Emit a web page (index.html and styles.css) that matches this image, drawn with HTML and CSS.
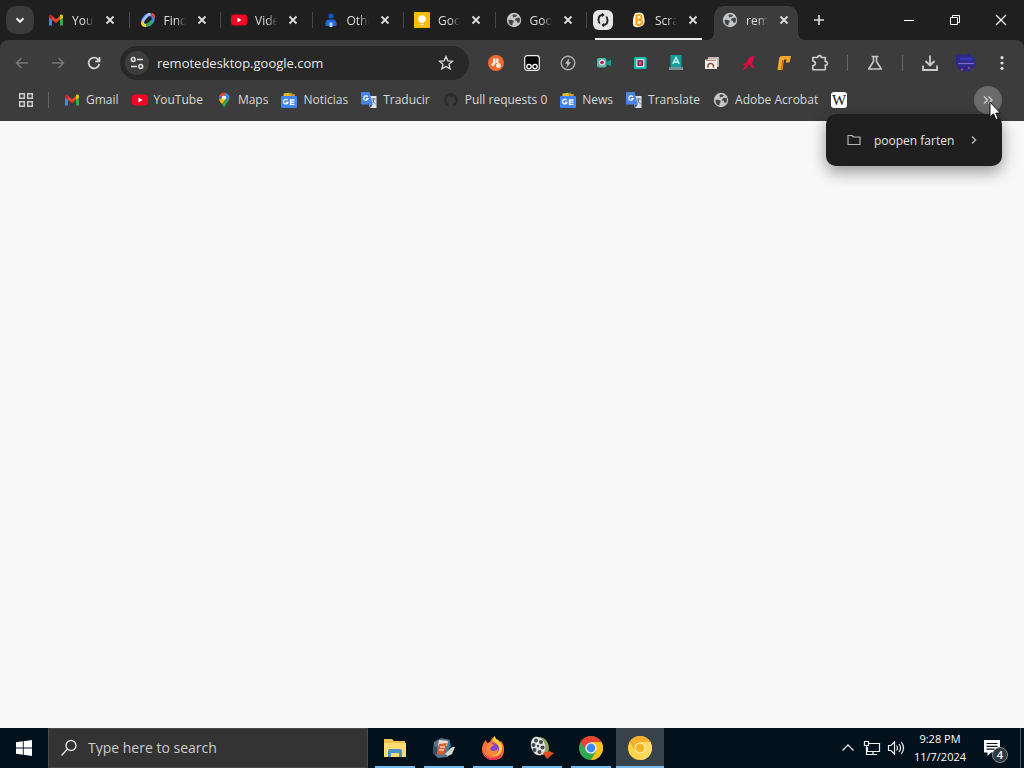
FILE: index.html
```html
<!DOCTYPE html>
<html lang="en">
<head>
<meta charset="utf-8">
<meta name="viewport" content="width=device-width, initial-scale=1">
<title>remotedesktop.google.com</title>
<link rel="stylesheet" href="styles.css">
</head>
<body>
<svg class="symbols" aria-hidden="true">
  <symbol id="close" viewBox="0 0 16 16"><path d="M4.500 4.500l7 7M11.500 4.500l-7 7" fill="none" stroke="#dedede" stroke-width="1.800"/></symbol>
  <symbol id="gmail" viewBox="0 0 16 16"><path d="M1 3.500v10h3V7z" fill="#4285f4"/><path d="M12 7v6.500h3v-10z" fill="#34a853"/><path d="M12 4l-4 3.200L4 4v3.700l4 3.200 4-3.200z" fill="#ea4335"/><path d="M1 4.500C1 2.300 3 2 4 3v4.700L1 5.500z" fill="#c5221f"/><path d="M15 4.500C15 2.300 13 2 12 3v4.700l3-2.200z" fill="#fbbc04"/></symbol>
  <symbol id="youtube" viewBox="0 0 16 16"><rect x="0" y="2.500" width="16" height="11" rx="3" fill="#f00525"/><path d="M6.500 5.600v4.800l4-2.400z" fill="#fff"/></symbol>
  <symbol id="globe" viewBox="0 0 16 16"><circle cx="8" cy="8" r="7.200" fill="#c3c5c7"/><path d="M2.500 8q3.500-.5 5 .8 1 1.500-.8 2.200l-.4 2.500Q2.500 13 2.500 8zM6.500 2.800Q9 2 11 3.200L9.500 5 7 5.300z" fill="#424446"/><path d="M9 7.200l2-1.500 2.800.3q.6 2.800-.8 5l-1.700-.5-.5-1.800-1.800-.2z" fill="#424446"/></symbol>
  <symbol id="gnews" viewBox="0 0 16 16"><path d="M3 1.500l8-1 .6 4H3z" fill="#33a853"/><path d="M2.500 1.700L8 .8l2.500 5h-8z" fill="#f2b928"/><path d="M9 1.500l5 .8-.6 3H9z" fill="#d99029"/><rect x="0" y="4" width="16" height="12" rx="1" fill="#4285f4"/><path d="M6.600 8.200A2.300 2.300 0 1 0 7 10.300H5M13.500 8h-4v4.300h4M9.500 10.200h4" fill="none" stroke="#fff" stroke-width="1.300"/></symbol>
  <symbol id="translate" viewBox="0 0 16 16"><path d="M6 4h9.500v12H9z" fill="#dfe3ea"/><path d="M0 0h8.500l3.300 12.500H0z" fill="#4b83e8"/><path d="M8.500 12.500h3.300L9 16z" fill="#2859b8"/><path d="M6.800 4.800A2.200 2.200 0 1 0 7.100 6.600H5" fill="none" stroke="#fff" stroke-width="1.200"/><path d="M10.700 7h4M12.700 6v1q0 3-1 4M11.700 8q1 2.600 3 4" fill="none" stroke="#667180"/></symbol>
</svg>

<header class="browser">
  <div class="tabstrip">
    <button class="tab-search" aria-label="Search tabs"><svg viewBox="0 0 12 12" width="12" height="12"><path d="M2.500 4.300L6 7.800l3.500-3.500" fill="none" stroke="#eee" stroke-width="2"/></svg></button>
    <div class="tabs">
      <div class="tab"><svg class="fav"><use href="#gmail"/></svg><span class="tab-title">YouTube</span><button class="tab-close" aria-label="Close tab"><svg class="fav"><use href="#close"/></svg></button></div>
      <div class="tab"><svg class="fav" viewBox="0 0 16 16"><ellipse cx="8" cy="8" rx="6" ry="4.500" transform="rotate(-45 8 8)" fill="none" stroke="#4285f4" stroke-width="3"/><path d="M2.500 9.500L8 2.700 10.500 2" stroke="#a1c5fa" stroke-width="2.600" fill="none"/><path d="M11.500 2.300q3 .5 2.200 3.300" stroke="#ea4335" stroke-width="2.600" fill="none"/><path d="M2.600 9.500q-.6 4.500 3.500 4" stroke="#fbd42b" stroke-width="3" fill="none"/><path d="M6.200 13.400q4-1.400 6-4.500" stroke="#34a853" stroke-width="3" fill="none"/></svg><span class="tab-title">Find hub</span><button class="tab-close" aria-label="Close tab"><svg class="fav"><use href="#close"/></svg></button></div>
      <div class="tab"><svg class="fav"><use href="#youtube"/></svg><span class="tab-title">Videos</span><button class="tab-close" aria-label="Close tab"><svg class="fav"><use href="#close"/></svg></button></div>
      <div class="tab"><svg class="fav" viewBox="0 0 16 16"><circle cx="8" cy="4" r="2.600" fill="#1557c0"/><path d="M2.500 14v-2.500q.3-4 4-4h3q3.700 0 4 4V14z" fill="#2169e0"/><path d="M6.500 10.500h3V15h-3z" fill="#b8d3ff"/></svg><span class="tab-title">Other</span><button class="tab-close" aria-label="Close tab"><svg class="fav"><use href="#close"/></svg></button></div>
      <div class="tab"><svg class="fav" viewBox="0 0 16 16"><rect width="16" height="16" rx="1" fill="#fbbc04"/><path d="M8 3a3.800 3.800 0 0 0-2 7v1h4v-1a3.800 3.800 0 0 0-2-7zM6.300 12h3.400v1H6.300z" fill="#fff"/></svg><span class="tab-title">Google</span><button class="tab-close" aria-label="Close tab"><svg class="fav"><use href="#close"/></svg></button></div>
      <div class="tab"><svg class="fav"><use href="#globe"/></svg><span class="tab-title">Google</span><button class="tab-close" aria-label="Close tab"><svg class="fav"><use href="#close"/></svg></button></div>
    </div>
    <div class="tab-group">
      <button class="chip" aria-label="Tab group"><svg viewBox="0 0 16 16" width="16" height="16"><path d="M7.500 3Q3.500 3.200 3.500 8q0 2 1.300 3.500M8.500 13q4-.2 4-5 0-2-1.300-3.500" fill="none" stroke="#222" stroke-width="1.900"/><path d="M7 .8L9.600 3 7 5.300zM9 10.700L6.400 13 9 15.200z" fill="#222"/></svg></button>
      <div class="tab grouped"><svg class="fav" viewBox="0 0 16 16"><path d="M4.500 1Q13-1 13 5q2.500 9-5 10-7 1-6-5Q2 3 4.500 1z" fill="#fff1d8"/><path d="M5.500 3v10M5.500 3.500q5-1.500 5 1.500 0 2.500-4 2.800 5-.3 4.700 2.700-.5 2.800-5.700 2.500" fill="none" stroke="#f5a21a" stroke-width="2"/></svg><span class="tab-title">Scratch</span><button class="tab-close" aria-label="Close tab"><svg class="fav"><use href="#close"/></svg></button></div>
    </div>
    <div class="tab active"><svg class="fav"><use href="#globe"/></svg><span class="tab-title">remote</span><button class="tab-close" aria-label="Close tab"><svg class="fav"><use href="#close"/></svg></button></div>
    <button class="new-tab" aria-label="New tab"><svg viewBox="0 0 16 16" width="16" height="16"><path d="M8 3v10M3 8h10" stroke="#e0e0e0" stroke-width="1.600"/></svg></button>
    <div class="window-buttons">
      <button aria-label="Minimize"><svg viewBox="0 0 12 12" width="12" height="12"><path d="M1 6.500h10" stroke="#fff"/></svg></button>
      <button aria-label="Restore"><svg viewBox="0 0 12 12" width="12" height="12"><path d="M1.500 3.500h7v7h-7zM3.500 3V1.500h7v7H9" fill="none" stroke="#fff"/></svg></button>
      <button aria-label="Close"><svg viewBox="0 0 12 12" width="12" height="12"><path d="M1 1l10 10M11 1L1 11" stroke="#fff" stroke-width="1.100"/></svg></button>
    </div>
  </div>

  <div class="toolbar">
    <button class="tool" aria-label="Back"><svg class="fav" viewBox="0 0 16 16"><path d="M14 8H3M7.500 3L2.500 8l5 5" fill="none" stroke="#777" stroke-width="1.500"/></svg></button>
    <button class="tool" aria-label="Forward"><svg class="fav" viewBox="0 0 16 16"><path d="M2 8h11M8.500 3l5 5-5 5" fill="none" stroke="#777" stroke-width="1.500"/></svg></button>
    <button class="tool" aria-label="Reload"><svg class="fav" viewBox="0 0 16 16"><path d="M13.300 9a5.400 5.400 0 1 1-1.200-4.600L13.500 6M13.500 2v4.300H9.200" fill="none" stroke="#d5d5d5" stroke-width="1.700"/></svg></button>
    <div class="omnibox">
      <button class="site-info" aria-label="View site information"><svg class="fav" viewBox="0 0 16 16"><circle cx="4.200" cy="4.500" r="1.900" fill="none" stroke="#e0e0e0" stroke-width="1.500"/><circle cx="11.800" cy="11.500" r="1.900" fill="none" stroke="#e0e0e0" stroke-width="1.500"/><path d="M8 4.500h6M2 11.500h6" stroke="#e0e0e0" stroke-width="1.600"/></svg></button>
      <input class="url" aria-label="Address" value="remotedesktop.google.com">
      <button class="star" aria-label="Bookmark this tab"><svg class="fav" viewBox="0 0 16 16"><path d="M8 1.500l1.900 4.300 4.700.4-3.600 3.100 1.100 4.600L8 11.400l-4.100 2.500L5 9.300 1.400 6.200l4.700-.4z" fill="none" stroke="#ddd" stroke-width="1.300"/></svg></button>
    </div>
    <div class="tools">
      <button class="tool" aria-label="Extension 1"><svg class="fav" viewBox="0 0 16 16"><circle cx="8" cy="8" r="8" fill="#f0692e"/><path d="M5 3.500h2.500V9H5zM8.200 3.500h2.300V8H8.200z" fill="#fff0e4"/><circle cx="5" cy="9.500" r="1.700" fill="#ffe4d1"/><circle cx="10.500" cy="10.500" r="2.500" fill="#ffe4d1"/></svg></button>
      <button class="tool" aria-label="Extension 2"><svg class="fav" viewBox="0 0 16 16"><rect x=".7" y=".7" width="14.600" height="14.600" rx="2.500" fill="#080808" stroke="#eee" stroke-width="1.200"/><circle cx="5" cy="11.500" r="2.200" fill="none" stroke="#fff" stroke-width="1.300"/><circle cx="11" cy="11.500" r="2.200" fill="none" stroke="#fff" stroke-width="1.300"/></svg></button>
      <button class="tool" aria-label="Extension 3"><svg class="fav" viewBox="0 0 16 16"><circle cx="8" cy="8" r="6.800" fill="none" stroke="#aaa" stroke-width="1.500"/><path d="M9.300 3L5 8.700h2.300L6.500 13 11 7.300H8.700z" fill="#bdbdbd"/></svg></button>
      <button class="tool" aria-label="Extension 4"><svg class="fav" viewBox="0 0 16 16"><rect x="1" y="3" width="9.500" height="9.500" rx="2" fill="#52b5ab"/><path d="M10.500 7L15 4.500V11l-4.500-1.500z" fill="#169d95"/><circle cx="6" cy="7.500" r="3" fill="#f0d9e4"/><circle cx="6" cy="7.500" r="1.800" fill="#a1204e"/></svg></button>
      <button class="tool" aria-label="Extension 5"><svg class="fav" viewBox="0 0 16 16"><rect x="2" y="2" width="12.500" height="12" rx="1.500" fill="#16bcae"/><rect x="4.800" y="4.500" width="7" height="7" fill="#7d284d" stroke="#b9dfe7" stroke-width="1.300"/><path d="M7 6.500h2.700v3H7z" fill="#e64870"/></svg></button>
      <button class="tool" aria-label="Extension 6"><svg class="fav" viewBox="0 0 16 16"><path d="M2.500 0h11v12h-11z" fill="#159f9c"/><path d="M4.700 9L8 2.500 11.300 9M6 7h4" fill="none" stroke="#d9ffff" stroke-width="1.300"/><path d="M1 12h14v3H1z" fill="#74918f"/></svg></button>
      <button class="tool" aria-label="Extension 7"><svg class="fav" viewBox="0 0 16 16"><path d="M4 2h11v10H4z" fill="#c3b8b2"/><path d="M1 4.500h12v9.500H1z" fill="#f4efec"/><path d="M4 12.500v-2q0-2 2.500-2t3 2v2" fill="none" stroke="#8a4739" stroke-width="1.500"/><path d="M2 5.500h10" stroke="#d08574"/></svg></button>
      <button class="tool" aria-label="Extension 8"><svg class="fav" viewBox="0 0 16 16"><path d="M1 15q3-.5 4.500-5T10 2q2-1.500 4.500-1L12 8.500l2.500 4.500-3.300-.5L10 9.500H8.500L6.500 13Q4 15.500 1 15z" fill="#e30b45"/><path d="M3 9.500l9-.8" stroke="#d60b3f" stroke-width="2.200"/></svg></button>
      <button class="tool" aria-label="Extension 9"><svg class="fav" viewBox="0 0 16 16"><path d="M1.500 15L3 4Q3.500 1 6 1h9l-1.500 6.500h-3.700l.8-3H8L6.500 15z" fill="#f7a62c"/><path d="M6.700 5L5.500 14.500" stroke="#b8571b" stroke-width="1"/></svg></button>
      <button class="tool" aria-label="Extensions"><svg viewBox="0 0 18 18" width="18" height="18"><path d="M1.800 3.500h5V2.300q1.800-1.500 3.500 0v1.200h4v4.300h1.400q1.400 1.600 0 3.200h-1.400v4.700H1.800v-4q2.600-.5 2.600-2.500T1.800 7z" fill="none" stroke="#ccc" stroke-width="1.600" stroke-linejoin="round"/></svg></button>
      <span class="divider"></span>
      <button class="tool" aria-label="Labs"><svg class="fav" viewBox="0 0 16 16"><path d="M4.500 1.500h7M6.500 2v4.500L1.700 14h12.600L9.500 6.500V2" fill="none" stroke="#c8c8c8" stroke-width="1.600" stroke-linejoin="round"/></svg></button>
      <span class="divider"></span>
      <button class="tool" aria-label="Downloads"><svg viewBox="0 0 18 18" width="18" height="18"><path d="M9 1.500v10M4.500 7L9 11.500 13.500 7M2 11.500V16h14v-4.500" fill="none" stroke="#ccc" stroke-width="1.800"/></svg></button>
      <button class="tool" aria-label="Profile"><svg viewBox="0 0 20 20" width="20" height="20"><path d="M5 1l4 1.500L13 0l3 3 3 3 1 5-2 4-3 1-1 3-4-1-2 2-2-3-4-1-1-3-4-4 3-3V2z" fill="#2c2a86"/><path d="M2 10.500h16" stroke="#7a68c4" stroke-width="1.300"/><path d="M4 6h12" stroke="#3737ad" stroke-width="3"/><path d="M5 16.500h2M12 15h2" stroke="#c14b67" stroke-width="1.500"/></svg></button>
      <button class="tool" aria-label="Menu"><svg class="fav" viewBox="0 0 16 16"><g fill="#ddd"><circle cx="8" cy="2.700" r="1.600"/><circle cx="8" cy="8" r="1.600"/><circle cx="8" cy="13.300" r="1.600"/></g></svg></button>
    </div>
  </div>

  <nav class="bookmarks" aria-label="Bookmarks">
    <button class="apps" aria-label="Apps"><svg class="fav" viewBox="0 0 16 16"><path d="M1.700 1.700h4.600v4.600H1.700zM9.700 1.700h4.600v4.600H9.700zM1.700 9.700h4.600v4.600H1.700zM9.700 9.700h4.600v4.600H9.700z" fill="none" stroke="#ccc" stroke-width="1.500"/></svg></button>
    <span class="divider"></span>
    <div class="links">
      <a href="#"><svg class="fav"><use href="#gmail"/></svg>Gmail</a>
      <a href="#"><svg class="fav"><use href="#youtube"/></svg>YouTube</a>
      <a href="#"><svg class="fav" viewBox="0 0 16 16"><path d="M3 8A5.700 5.700 0 0 1 3.500 3l4 3z" fill="#1a73e8"/><path d="M3.500 3.200Q6-.7 10 1L5.500 6.300z" fill="#ea4335"/><path d="M9 .7Q13 2 13.600 5.200L9 9z" fill="#4285f4"/><path d="M13.600 5q.2 3-2.400 5.500Q9 13 8 16q-.8-2.500-2-4z" fill="#34a853"/><path d="M3 7.500L7 5.500l2.500 2.300L6 12Q3.800 9.800 3 7.500z" fill="#fbbc04"/><circle cx="8" cy="5.500" r="2" fill="#fff"/></svg>Maps</a>
      <a href="#"><svg class="fav"><use href="#gnews"/></svg>Noticias</a>
      <a href="#"><svg class="fav"><use href="#translate"/></svg>Traducir</a>
      <a href="#"><svg class="fav" viewBox="0 0 16 16"><path d="M5.500 14.500A7 7 0 1 1 10.500 14.500v-3q2.500-.8 2-3.500-.2-1.500-1-2.500l-.2-1.800L9.500 4.500h-3L4.700 3.700l-.2 1.800Q1.800 10 5.500 11.500z" fill="#292b2d"/></svg>Pull requests 0</a>
      <a href="#"><svg class="fav"><use href="#gnews"/></svg>News</a>
      <a href="#"><svg class="fav"><use href="#translate"/></svg>Translate</a>
      <a href="#"><svg class="fav"><use href="#globe"/></svg>Adobe Acrobat</a>
      <a href="#" class="wiki" aria-label="Wikipedia">W</a>
    </div>
    <div class="overflow">
      <button class="more" aria-label="More bookmarks"><svg viewBox="0 0 12 12" width="12" height="12"><path d="M2 2.500L5.500 6 2 9.500M6.500 2.500L10 6 6.500 9.500" fill="none" stroke="#ccc" stroke-width="1.400"/></svg></button>
      <div class="menu">
        <button class="menu-item"><svg viewBox="0 0 14 12" width="14" height="12"><path d="M1 1.500h4l1.500 1.500H13v7.500H1z" fill="none" stroke="#b5b5b5" stroke-width="1.200" stroke-linejoin="round"/></svg><span>poopen farten</span><svg viewBox="0 0 8 10" width="8" height="10"><path d="M2 1.500L5.500 5 2 8.500" fill="none" stroke="#bbb" stroke-width="1.400"/></svg></button>
      </div>
      <svg class="cursor" viewBox="0 0 12 20" width="12" height="20"><path d="M1 1v15l3.500-3.200 2.400 5.800 2.300-1-2.400-5.500h4.500z" fill="#fff" stroke="#111" stroke-width="1"/></svg>
    </div>
  </nav>
</header>

<main class="page"></main>

<footer class="taskbar">
  <button class="start" aria-label="Start"><svg viewBox="0 0 16 16" width="16" height="16"><path d="M0 2.300L6.800 1.300v6.200H0zM7.700 1.200L16 0v7.500H7.700zM0 8.400h6.800v6.300L0 13.700zM7.700 8.400H16V16l-8.300-1.200z" fill="#fff"/></svg></button>
  <label class="search"><svg viewBox="0 0 18 18" width="18" height="18"><circle cx="11" cy="6.500" r="5" fill="none" stroke="#ddd" stroke-width="1.400"/><path d="M7.300 10.200L1.500 16.500" stroke="#ddd" stroke-width="1.400"/></svg><input aria-label="Search" placeholder="Type here to search"></label>
  <div class="apps-row">
    <button class="app" aria-label="File Explorer"><svg viewBox="0 0 24 24" width="24" height="24"><path d="M1 3h8l2 2h11v16H1z" fill="#efc150"/><path d="M1 7h22v14H1z" fill="#ffdc72"/><path d="M5 21v-6q0-2 2-2h10q2 0 2 2v6h-3v-4H8v4z" fill="#4b93c7"/></svg></button>
    <button class="app" aria-label="Media app"><svg viewBox="0 0 24 24" width="24" height="24"><path d="M2 6l7-4 9 2-2 17-10 1-5-5z" fill="#57748b"/><path d="M7 4l9 1-1 5H6z" fill="#f1dccd"/><path d="M7 8l8-1-3 12-7-1z" fill="#d95f30"/><path d="M8 11h5M7 14h5" stroke="#f5d2b8" stroke-width="1.500"/><path d="M1 10l4 1v7H2z" fill="#304d62"/><path d="M17 14q3-4 6-3l-3 7-4 2-3-2z" fill="#d3d8cf"/><path d="M17 5l2 5-3 4z" fill="#2887b5"/></svg></button>
    <button class="app" aria-label="Firefox"><svg viewBox="0 0 24 24" width="24" height="24"><path d="M12 24C5 24 1 19 1 13 1 9 3 6 5 4l1 3 3-1q1-4 5-6 0 3 3 4 1 1 1 2l2-1q3 3 3 8 0 11-11 11z" fill="#ff7139"/><path d="M14 0q0 3 3 4 6 5 3 12-4 6-10 3 7-1 8-6 0-5-6-8-1-2 2-5z" fill="#ffcf3a"/><circle cx="12" cy="13" r="6" fill="#8144cf"/><path d="M6 8q4-2 7 1l-3 2q-2 3 2 4 4 0 5-3 1 7-6 8-7-1-5-12z" fill="#ff873d"/><path d="M2 15q3 8 11 7 6-1 8-6-2 8-9 8-8 0-10-9z" fill="#f22467"/></svg></button>
    <button class="app" aria-label="Movie maker"><svg viewBox="0 0 24 24" width="24" height="24"><path d="M10 1q8 1 9 11l-1 6-6 1z" fill="#8fa35c"/><ellipse cx="8" cy="10" rx="7" ry="9.500" transform="rotate(-15 8 10)" fill="#e2e5e3"/><g fill="#3e4b50"><circle cx="6" cy="4.500" r="2"/><circle cx="11" cy="6" r="2"/><circle cx="12.500" cy="11.500" r="2"/><circle cx="9.500" cy="16" r="2"/><circle cx="4.500" cy="14" r="2"/><circle cx="3.500" cy="9" r="2"/><circle cx="8" cy="10" r="1.200"/></g><path d="M13 17l6-2 5 2-7 6z" fill="#df4a22"/></svg></button>
    <button class="app" aria-label="Chrome"><svg viewBox="0 0 24 24" width="24" height="24"><circle cx="12" cy="12" r="12" fill="#34a853"/><path d="M12 12L1.600 6A12 12 0 0 1 22.400 6z" fill="#ea4335"/><path d="M12 6h10.400A12 12 0 0 1 12 24l5.200-9z" fill="#fbc116"/><path d="M1.600 6l5.200 9L12 12z" fill="#34a853"/><path d="M1.600 6L5 12l4-6z" fill="#ea4335"/><circle cx="12" cy="12" r="5.600" fill="#fff"/><circle cx="12" cy="12" r="4.400" fill="#4285f4"/></svg></button>
    <button class="app current" aria-label="Chrome Canary"><svg viewBox="0 0 24 24" width="24" height="24"><circle cx="12" cy="12" r="12" fill="#ffd34a"/><path d="M1.600 6A12 12 0 0 1 22.400 6H12l-5 9z" fill="#f4b02a"/><path d="M22.400 6A12 12 0 0 1 12 24l5.200-9L12 6z" fill="#ffdb63"/><circle cx="12" cy="12" r="5.600" fill="#fff1b5"/><circle cx="12" cy="12" r="4.400" fill="#f1b51f"/></svg></button>
  </div>
  <div class="tray">
    <button class="tray-icon" aria-label="Show hidden icons"><svg viewBox="0 0 14 14" width="14" height="14"><path d="M1.500 9.500L7 4l5.500 5.500" fill="none" stroke="#eee" stroke-width="1.300"/></svg></button>
    <button class="tray-icon" aria-label="Network"><svg viewBox="0 0 18 16" width="18" height="16"><path d="M6 3.500h10.500v8H4.500V7M10 12v2.500M6 14.500h8" fill="none" stroke="#eee" stroke-width="1.200"/><path d="M1.500 1.500h4v4h-4zM3.500 5.500v9H6" fill="none" stroke="#eee" stroke-width="1.200"/></svg></button>
    <button class="tray-icon" aria-label="Volume"><svg viewBox="0 0 18 16" width="18" height="16"><path d="M1.500 5.500H4l3.500-3.500v12L4 10.500H1.500zM9.500 5.500q2 2.500 0 5M12 4q3.200 4 0 8M14.300 2.200q4.500 5.800 0 11.600" fill="none" stroke="#eee" stroke-width="1.200"/></svg></button>
    <div class="clock"><span>9:28 PM</span><span>11/7/2024</span></div>
    <button class="notice" aria-label="4 notifications"><svg viewBox="0 0 18 18" width="18" height="18"><path d="M1 1h16v12.500H8L4.500 17v-3.500H1z" fill="#fff"/><path d="M3.500 4.500h11M3.500 7.300h11M3.500 10.100h8" stroke="#07131e" stroke-width="1.200"/></svg><span class="badge">4</span></button>
    <span class="show-desktop"></span>
  </div>
</footer>
</body>
</html>
```

FILE: styles.css
```css
* { box-sizing: border-box; }

body {
  margin: 0;
  min-height: 100vh;
  display: flex;
  flex-direction: column;
  background: #f8f8f8;
  font: 12px/16px "Open Sans", "Noto Sans", sans-serif;
  color: #dedede;
}

button {
  display: flex;
  align-items: center;
  justify-content: center;
  flex: none;
  margin: 0;
  padding: 0;
  border: 0;
  background: none;
  color: inherit;
  font: inherit;
}

input {
  min-width: 0;
  padding: 0;
  border: 0;
  outline: 0;
  background: none;
  color: inherit;
  font: inherit;
}

svg { display: block; flex: none; }
.symbols { position: absolute; width: 0; height: 0; }
.fav { width: 16px; height: 16px; }

.browser { background: #1f1f1f; }

/* Tab strip */
.tabstrip { display: flex; height: 40px; align-items: center; }

.tab-search {
  width: 28px;
  height: 28px;
  margin: 0 6px;
  border-radius: 10px;
  background: #3b3b3b;
}

.tabs { display: flex; flex: 0 1 549px; }

.tab {
  position: relative;
  display: flex;
  flex: 1 1 0;
  align-items: center;
  height: 34px;
  padding-left: 8px;
}

.tabs .tab::after {
  content: "";
  width: 1px;
  height: 16px;
  margin: 0 2px 0 auto;
  background: #494949;
}

.tab-title {
  width: 22px;
  margin: 0 8px;
  padding-top: 2px;
  overflow: hidden;
  white-space: nowrap;
  mask-image: linear-gradient(90deg, #000 55%, transparent);
}

.tab-close { width: 16px; height: 16px; }

.tab-group {
  display: flex;
  align-items: center;
  align-self: stretch;
  gap: 10px;
  width: 109px;
  margin-left: 4px;
  background: linear-gradient(#ececec, #ececec) 2px 38px / 107px 2px no-repeat;
}

.chip {
  width: 20px;
  height: 20px;
  border-radius: 6px;
  background: #e6e6e6;
}

.tab.active {
  flex: 0 0 84px;
  align-self: flex-end;
  margin-left: 12px;
  padding-bottom: 6px;
  border-radius: 10px 10px 0 0;
  background: #3c3c3c;
}

.tab.active::before,
.tab.active::after {
  content: "";
  position: absolute;
  bottom: 0;
  width: 8px;
  height: 8px;
}

.tab.active::before { right: 100%; background: radial-gradient(circle at 0 0, transparent 8px, #3c3c3c 8px); }
.tab.active::after { left: 100%; background: radial-gradient(circle at 100% 0, transparent 8px, #3c3c3c 8px); }

.new-tab { width: 28px; height: 28px; margin-left: 7px; }
.window-buttons { display: flex; margin-left: auto; }
.window-buttons button { width: 46px; height: 40px; }

/* Toolbar */
.toolbar {
  display: flex;
  align-items: center;
  height: 44px;
  padding: 2px 4px 0;
  border-radius: 8px 8px 0 0;
  background: #3c3c3c;
}

.tool { width: 36px; height: 32px; }
.tools { display: flex; align-items: center; }

.omnibox {
  display: flex;
  flex: 1;
  align-items: center;
  min-width: 0;
  height: 34px;
  margin: 0 9px 0 8px;
  padding: 0 15px 0 5px;
  border-radius: 17px;
  background: #282828;
}

.site-info {
  width: 24px;
  height: 24px;
  margin-right: 8px;
  border-radius: 12px;
  background: #3c3c3c;
}

.url { flex: 1; height: 24px; font-size: 13px; color: #e6e6e6; }
.divider { width: 1px; height: 16px; margin: 0 9px; background: #666; }

/* Bookmarks bar */
.bookmarks {
  display: flex;
  align-items: center;
  height: 37px;
  padding: 0 22px 5px 8px;
  background: #3c3c3c;
}

.apps { width: 36px; height: 28px; }
.bookmarks > .divider { margin: 0 15px 0 4px; }
.links { display: flex; gap: 13px; }

.links a {
  display: flex;
  align-items: center;
  gap: 6px;
  color: #d8d8d8;
  text-decoration: none;
  white-space: nowrap;
}

.links .wiki {
  justify-content: center;
  width: 16px;
  height: 16px;
  border-radius: 3px;
  background: #fff;
  color: #111;
  font: 15px/16px "Liberation Serif", serif;
}

.overflow { position: relative; margin-left: auto; }
.more { width: 28px; height: 28px; border-radius: 14px; background: #6b6b6b; }

.menu {
  position: absolute;
  top: 28px;
  right: 0;
  width: 176px;
  padding: 10px 0;
  border-radius: 10px;
  background: #1f1f1f;
  box-shadow: 0 6px 16px rgba(0, 0, 0, 0.4);
}

.menu-item { width: 100%; height: 32px; padding: 0 24px 0 21px; color: #e3e3e3; }
.menu-item span { flex: 1; padding: 2px 0 0 13px; text-align: left; white-space: nowrap; }
.cursor { position: absolute; top: 15px; left: 15px; }

.page { flex: 1; }

/* Taskbar */
.taskbar { display: flex; height: 40px; background: #03111c; }
.start { width: 48px; }

.search {
  display: flex;
  flex: 0 1 320px;
  align-items: center;
  gap: 10px;
  padding: 0 11px;
  border: 1px solid #484848;
  background: #333;
  font-size: 14px;
}

.search input { flex: 1; }
.search input::placeholder { color: #ccc; opacity: 1; }
.apps-row { display: flex; gap: 1px; margin-left: 3px; }

.app {
  width: 48px;
  background: linear-gradient(#76b9ed, #76b9ed) 50% 100% / 40px 2px no-repeat;
}

.app.current {
  background: linear-gradient(#76b9ed, #76b9ed) 50% 100% / 48px 2px no-repeat #37424b;
}

.tray { display: flex; align-items: center; margin-left: auto; color: #fff; }
.tray-icon { width: 24px; height: 40px; }

.clock {
  display: flex;
  flex-direction: column;
  width: 64px;
  font-size: 11px;
  line-height: 18px;
  text-align: center;
}

.notice { position: relative; width: 40px; height: 40px; }

.badge {
  position: absolute;
  right: 4px;
  bottom: 5px;
  width: 16px;
  height: 16px;
  border: 1px solid #838b91;
  border-radius: 8px;
  background: #313a41;
  font-size: 11px;
  font-weight: 600;
  line-height: 14px;
}

.show-desktop { width: 4px; height: 40px; margin-left: 8px; border-left: 1px solid #4c5862; }
```
